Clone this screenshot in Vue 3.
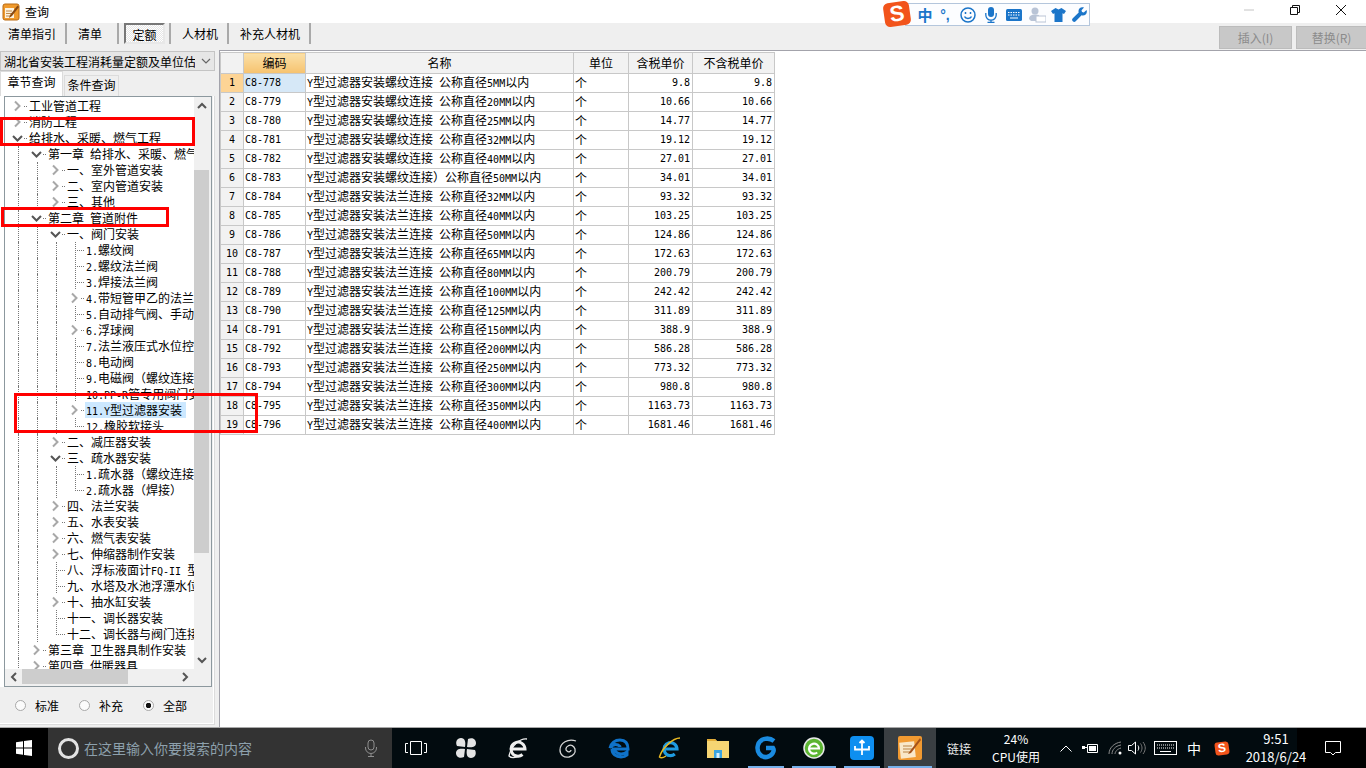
<script setup>
const toolTabs = [
  { label: '清单指引', w: 67 },
  { label: '清单', w: 52 },
  { label: '定额', w: 52, active: true },
  { label: '人材机', w: 58 },
  { label: '补充人材机', w: 82 }
]

// level, state (o = open, c = closed, l = leaf), text
const rawTree = [
  [0, 'c', '工业管道工程'],
  [0, 'c', '消防工程'],
  [0, 'o', '给排水、采暖、燃气工程'],
  [1, 'o', '第一章 给排水、采暖、燃气工程'],
  [2, 'c', '一、室外管道安装'],
  [2, 'c', '二、室内管道安装'],
  [2, 'c', '三、其他'],
  [1, 'o', '第二章 管道附件'],
  [2, 'o', '一、阀门安装'],
  [3, 'l', '1.螺纹阀'],
  [3, 'l', '2.螺纹法兰阀'],
  [3, 'l', '3.焊接法兰阀'],
  [3, 'c', '4.带短管甲乙的法兰阀'],
  [3, 'l', '5.自动排气阀、手动放风阀'],
  [3, 'c', '6.浮球阀'],
  [3, 'l', '7.法兰液压式水位控制阀'],
  [3, 'l', '8.电动阀'],
  [3, 'l', '9.电磁阀（螺纹连接）'],
  [3, 'l', '10.PP-R管专用阀门安装'],
  [3, 'c', '11.Y型过滤器安装', true],
  [3, 'l', '12.橡胶软接头'],
  [2, 'c', '二、减压器安装'],
  [2, 'o', '三、疏水器安装'],
  [3, 'l', '1.疏水器（螺纹连接）'],
  [3, 'l', '2.疏水器（焊接）'],
  [2, 'c', '四、法兰安装'],
  [2, 'c', '五、水表安装'],
  [2, 'c', '六、燃气表安装'],
  [2, 'c', '七、伸缩器制作安装'],
  [2, 'l', '八、浮标液面计FQ-II 型液位计'],
  [2, 'l', '九、水塔及水池浮漂水位标尺'],
  [2, 'c', '十、抽水缸安装'],
  [2, 'l', '十一、调长器安装'],
  [2, 'l', '十二、调长器与阀门连接'],
  [1, 'c', '第三章 卫生器具制作安装'],
  [1, 'c', '第四章 供暖器具'],
  [0, 'c', '通风空调工程']
]

function hasNext(i, level) {
  for (let j = i + 1; j < rawTree.length; j++) {
    if (rawTree[j][0] < level) return false
    if (rawTree[j][0] === level) return true
  }
  return false
}

const treeRows = rawTree.map(([level, state, text, selected], i) => ({
  level,
  state,
  text,
  selected,
  guides: Array.from({ length: level }, (_, l) => hasNext(i, l)),
  next: hasNext(i, level)
}))

// latin runs are half width in the original font, so split them out
function split(text) {
  return text.split(/([\x20-\x7e]+)/).filter(Boolean).map((t) => ({ t, lat: /^[\x20-\x7e]/.test(t) }))
}

const prices = [
  ['C8-778', 'Y型过滤器安装螺纹连接 公称直径5MM以内', '9.8'],
  ['C8-779', 'Y型过滤器安装螺纹连接 公称直径20MM以内', '10.66'],
  ['C8-780', 'Y型过滤器安装螺纹连接 公称直径25MM以内', '14.77'],
  ['C8-781', 'Y型过滤器安装螺纹连接 公称直径32MM以内', '19.12'],
  ['C8-782', 'Y型过滤器安装螺纹连接 公称直径40MM以内', '27.01'],
  ['C8-783', 'Y型过滤器安装螺纹连接）公称直径50MM以内', '34.01'],
  ['C8-784', 'Y型过滤器安装法兰连接 公称直径32MM以内', '93.32'],
  ['C8-785', 'Y型过滤器安装法兰连接 公称直径40MM以内', '103.25'],
  ['C8-786', 'Y型过滤器安装法兰连接 公称直径50MM以内', '124.86'],
  ['C8-787', 'Y型过滤器安装法兰连接 公称直径65MM以内', '172.63'],
  ['C8-788', 'Y型过滤器安装法兰连接 公称直径80MM以内', '200.79'],
  ['C8-789', 'Y型过滤器安装法兰连接 公称直径100MM以内', '242.42'],
  ['C8-790', 'Y型过滤器安装法兰连接 公称直径125MM以内', '311.89'],
  ['C8-791', 'Y型过滤器安装法兰连接 公称直径150MM以内', '388.9'],
  ['C8-792', 'Y型过滤器安装法兰连接 公称直径200MM以内', '586.28'],
  ['C8-793', 'Y型过滤器安装法兰连接 公称直径250MM以内', '773.32'],
  ['C8-794', 'Y型过滤器安装法兰连接 公称直径300MM以内', '980.8'],
  ['C8-795', 'Y型过滤器安装法兰连接 公称直径350MM以内', '1163.73'],
  ['C8-796', 'Y型过滤器安装法兰连接 公称直径400MM以内', '1681.46']
]

const radios = [
  { label: '标准' },
  { label: '补充' },
  { label: '全部', on: true }
]

const pins = [
  { id: 'fan', w: 52 },
  { id: 'e360', w: 52 },
  { id: 'swirl', w: 48 },
  { id: 'edge', w: 56 },
  { id: 'ie', w: 44 },
  { id: 'folder', w: 52 },
  { id: 'g', w: 44, run: true },
  { id: 'green', w: 52, run: true },
  { id: 'cross', w: 44, run: true },
  { id: 'note', w: 52, run: true, current: true }
]
</script>

<template>
  <div class="screen">
    <header class="titlebar">
      <svg class="app-icon" width="18" height="18" viewBox="0 0 18 18">
        <rect x="1" y="1" width="16" height="16" rx="2" fill="#f09a2c" stroke="#b96a12" />
        <path d="M3 5h9v10H3z" fill="#fdf3df" />
        <path d="M4 8h6M4 10.5h6M4 13h5" stroke="#c08a4a" />
        <path d="M15.5 2.5 8 12l-1 3 3-2 7-9z" fill="#8a4a12" />
      </svg>
      <span class="title-text">查询</span>
      <div class="window-btns">
        <svg width="12" height="12" viewBox="0 0 12 12"><path d="M1 6h10" stroke="#c4c4c4" /></svg>
        <svg width="12" height="12" viewBox="0 0 12 12" fill="none" stroke="#111"><path d="M1.5 3.5h7v7h-7zM3.5 3.500v-2h7v7h-2" /></svg>
        <svg width="12" height="12" viewBox="0 0 12 12" stroke="#111"><path d="M1 1l10 10M11 1 1 11" /></svg>
      </div>
    </header>

    <div class="toolbar">
      <div class="tool-tabs">
        <span v-for="tab in toolTabs" :key="tab.label" class="tool-cell" :style="{ width: tab.w + 'px' }">
          <span class="tool-tab" :class="{ active: tab.active }">{{ tab.label }}</span>
        </span>
      </div>
      <div class="actions">
        <button class="action">插入(I)</button>
        <button class="action">替换(R)</button>
      </div>
    </div>

    <main class="main">
      <aside class="left">
        <div class="combo">
          <span class="combo-text">湖北省安装工程消耗量定额及单位估价表</span>
          <svg width="10" height="6" viewBox="0 0 10 6" fill="none" stroke="#666" stroke-width="1.2"><path d="M1 1l4 4 4-4" /></svg>
        </div>
        <div class="tabs">
          <span class="tab active">章节查询</span>
          <span class="tab">条件查询</span>
        </div>
        <div class="pane">
          <div class="tree-box">
            <div class="tree-top">
              <div class="tree-view">
                <div v-for="row in treeRows" :key="row.text" class="tree-row">
                  <span v-for="(g, k) in row.guides" :key="k" class="indent" :class="{ guide: g }"></span>
                  <span class="node" :class="[row.state === 'l' ? 'leaf' : 'branch', row.next ? 'full' : 'half']">
                    <svg v-if="row.state === 'c'" width="13" height="16" viewBox="0 0 13 16" fill="none" stroke="#a8a8a8" stroke-width="2"><path d="M4 3.500 8.500 8 4 12.500" /></svg>
                    <svg v-else-if="row.state === 'o'" width="13" height="16" viewBox="0 0 13 16" fill="none" stroke="#555" stroke-width="2"><path d="M2 6l4.500 4.500L11 6" /></svg>
                  </span>
                  <span class="label" :class="{ selected: row.selected }"><span v-for="(p, k) in split(row.text)" :key="k" :class="{ lat: p.lat }">{{ p.t }}</span></span>
                </div>
              </div>
              <div class="vscroll">
                <svg width="16" height="17" viewBox="0 0 16 17" fill="none" stroke="#555" stroke-width="2"><path d="M4 11l4-4 4 4" /></svg>
                <div class="vtrack"><div class="vthumb"></div></div>
                <svg width="16" height="17" viewBox="0 0 16 17" fill="none" stroke="#555" stroke-width="2"><path d="M4 6l4 4 4-4" /></svg>
              </div>
            </div>
            <div class="hscroll">
              <svg width="17" height="16" viewBox="0 0 17 16" fill="none" stroke="#555" stroke-width="2"><path d="M11 4 7 8l4 4" /></svg>
              <div class="htrack"><div class="hthumb"></div></div>
              <svg width="17" height="16" viewBox="0 0 17 16" fill="none" stroke="#555" stroke-width="2"><path d="M6 4l4 4-4 4" /></svg>
              <span class="corner"></span>
            </div>
          </div>
          <div class="radios">
            <label v-for="r in radios" :key="r.label" class="radio">
              <span class="dot" :class="{ on: r.on }"></span>{{ r.label }}
            </label>
          </div>
        </div>
      </aside>

      <section class="right">
        <table class="grid">
          <colgroup>
            <col class="c-idx" /><col class="c-code" /><col class="c-name" /><col class="c-unit" /><col class="c-tax" /><col class="c-notax" />
          </colgroup>
          <thead>
            <tr>
              <th class="corner-th"></th>
              <th class="hot">编码</th>
              <th>名称</th>
              <th>单位</th>
              <th>含税单价</th>
              <th>不含税单价</th>
            </tr>
          </thead>
          <tbody>
            <tr v-for="(row, i) in prices" :key="row[0]">
              <td class="idx" :class="{ hot: i === 0 }">{{ i + 1 }}</td>
              <td class="mono" :class="{ current: i === 0 }">{{ row[0] }}</td>
              <td><span v-for="(p, k) in split(row[1])" :key="k" :class="{ lat: p.lat }">{{ p.t }}</span></td>
              <td>个</td>
              <td class="mono num">{{ row[2] }}</td>
              <td class="mono num">{{ row[2] }}</td>
            </tr>
          </tbody>
        </table>
      </section>
    </main>

    <footer class="taskbar">
      <div class="start">
        <svg width="16" height="16" viewBox="0 0 16 16" fill="#fff"><path d="M0 2.300 7 1.300v6.300H0zM8 1.100 16 0v7.600H8zM0 8.500h7v6.300L0 13.800zM8 8.500h8V16l-8-1.100z" /></svg>
      </div>
      <div class="search">
        <span class="cortana"></span>
        <span class="search-text">在这里输入你要搜索的内容</span>
        <svg width="14" height="18" viewBox="0 0 14 18" fill="none" stroke="#8f8f8f"><rect x="4" y="1" width="6" height="10" rx="3" /><path d="M1.500 8v1a5.500 5.500 0 0 0 11 0V8M7 15v2M4 17.500h6" /></svg>
      </div>
      <div class="task-view">
        <svg width="22" height="14" viewBox="0 0 22 14" fill="none" stroke="#fff"><path d="M5.500.5h11v13h-11zM3 2.500H.500v9H3M19 2.500h2.500v9H19" /></svg>
      </div>
      <div class="pins">
        <div v-for="pin in pins" :key="pin.id" class="pin" :class="{ current: pin.current }" :style="{ width: pin.w + 'px' }">
          <svg width="24" height="24" viewBox="0 0 24 24">
            <g v-if="pin.id === 'fan'" fill="#e4e4e4">
              <path d="M11 11 3 10C1 6 3 2 7 2s5 4 4 9zM13 11l1-8c4-2 8 0 8 4s-4 5-9 4zM13 13l8 1c2 4 0 8-4 8s-5-4-4-9zM11 13l-1 8c-4 2-8 0-8-4s4-5 9-4z" />
            </g>
            <g v-else-if="pin.id === 'e360'" fill="none" stroke="#efefef">
              <path d="M5 13h14a7 7 0 1 0-2.500 5.500" stroke-width="3" />
              <path d="M21 3C14 2 5 10 3 20c2 2 5 2 8 1" stroke-width="1.300" />
            </g>
            <g v-else-if="pin.id === 'swirl'" fill="none" stroke="#d6d6d6" stroke-width="1.300">
              <path d="M20 5c-8-3-16 2-16 9 0 5 4 8 9 7 4-1 7-4 6-8-1-3-4-5-7-3-2 1-3 4-1 5 2 2 4 0 4-1" />
            </g>
            <path v-else-if="pin.id === 'edge'" d="M4 13h16c0-6-3-9-8-9-5 0-9 3-10 8 2-3 5-4 8-3 1 1 2 1 2 2M4 13c0 5 4 8 9 8 3 0 5-1 6-2v-3c-3 2-8 3-11 0-1-1-2-2-2-3" fill="none" stroke="#0f72c9" stroke-width="3" />
            <g v-else-if="pin.id === 'ie'" fill="none">
              <path d="M6 13h13a6.500 6.500 0 1 0-2.200 5" stroke="#1f9be0" stroke-width="3.200" />
              <path d="M22 2C15 2 4 12 1.500 21c2 2 5 0 6.500-1" stroke="#e8b923" stroke-width="1.500" />
            </g>
            <g v-else-if="pin.id === 'folder'">
              <path d="M1 3h8l2 2h12v17H1z" fill="#f6d573" />
              <path d="M1 3h8l2 2H1z" fill="#e3ad38" />
              <path d="M8 14h8v8H8z" fill="#3ba3e0" />
              <path d="M10.500 17h3v5h-3z" fill="#d7eefb" />
            </g>
            <path v-else-if="pin.id === 'g'" d="M20 5C15 1 6 2 4 9c-2 7 3 13 9 12 5-1 8-6 6-9h-7" fill="none" stroke="#1a8be0" stroke-width="4.500" />
            <g v-else-if="pin.id === 'green'" fill="none">
              <circle cx="12" cy="12" r="10" fill="#5cb531" stroke="#e8e8e8" stroke-width="1.500" />
              <path d="M7 12.500h10a5 5 0 1 0-1.800 4" stroke="#fff" stroke-width="2.200" />
            </g>
            <g v-else-if="pin.id === 'cross'">
              <rect width="24" height="24" rx="4" fill="#0e8ff0" />
              <path d="M12 5v14M5 10v3.500h14V10M9.500 7 12 4.500 14.500 7" fill="none" stroke="#fff" stroke-width="1.800" />
            </g>
            <g v-else>
              <rect width="24" height="24" rx="2" fill="#f19a31" />
              <path d="M2 6h15v16H2z" fill="#f9e8c9" transform="rotate(-6 9 14)" />
              <path d="M5 10h9M5 13h9M5 16h8" stroke="#b98345" />
              <path d="M22 2 12 15l-2 3 3-1L23 4z" fill="#a5521a" />
            </g>
          </svg>
          <span v-if="pin.run" class="run-bar"></span>
        </div>
      </div>
      <span class="link-band">链接</span>
      <div class="cpu"><span>24%</span><span>CPU使用</span></div>
      <div class="tray">
        <svg width="12" height="7" viewBox="0 0 12 7" fill="none" stroke="#fff"><path d="M.500 6.500 6 1l5.500 5.500" /></svg>
        <svg width="16" height="11" viewBox="0 0 16 11"><path d="M5.500 1.500h10v8h-10z" fill="none" stroke="#fff" /><path d="M7 3h7v5H7z" fill="#fff" /><path d="M0 3h3v3H0zM3 4h2v1H3z" fill="#fff" /></svg>
        <svg width="14" height="14" viewBox="0 0 14 14" fill="none" stroke="#8c8c8c"><path d="M1 13C1 7 6 2 13 1M4 13c0-4 3-8 9-9M7 13c0-2 2-5 6-6" /><circle cx="12" cy="12" r="1.500" fill="#fff" stroke="none" /></svg>
        <svg width="18" height="14" viewBox="0 0 18 14" fill="none" stroke="#fff"><path d="M.500 4.500h3l4-3.500v12l-4-3.500h-3z" /><path d="M10 4.500c1 1.500 1 3.500 0 5" /><path d="M12.500 2.500c2 3 2 6 0 9M15 1c3 4 3 8 0 12" stroke="#777" /></svg>
        <svg width="23" height="14" viewBox="0 0 23 14" fill="none" stroke="#fff"><rect x=".5" y=".5" width="22" height="13" /><path d="M3 4h17M3 7h17" stroke-dasharray="1 1" /><path d="M6 10.500h11" /></svg>
        <span class="tray-zh">中</span>
        <span class="sogou small">S</span>
      </div>
      <div class="clock"><span>9:51</span><span>2018/6/24</span></div>
      <div class="notify">
        <svg width="16" height="16" viewBox="0 0 16 16" fill="none" stroke="#fff"><path d="M.500 1.500h15v11h-5L8 15l-2.500-2.500h-5z" /></svg>
      </div>
    </footer>

    <!-- sogou ime bar floats over the window -->
    <div class="ime">
      <div class="ime-bar">
        <span class="ime-zh">中</span>
        <span class="ime-punct">°,</span>
        <svg width="16" height="16" viewBox="0 0 16 16" fill="none" stroke="#1b75c9" stroke-width="1.500"><circle cx="8" cy="8" r="7" /><path d="M4.500 9.500c1 2.500 6 2.500 7 0" /><path d="M5.500 5v2M10.500 5v2" /></svg>
        <svg width="12" height="16" viewBox="0 0 12 16" fill="#1b75c9"><rect x="3" y="0" width="6" height="10" rx="3" /><path d="M.8 6v2a5.200 5.200 0 0 0 10.400 0V6M6 13v2M2.500 15.500h7" fill="none" stroke="#1b75c9" stroke-width="1.300" /></svg>
        <svg width="16" height="12" viewBox="0 0 16 12"><rect width="16" height="12" rx="1.500" fill="#1b75c9" /><path d="M2 3.500h12M2 6h12" stroke="#fff" stroke-dasharray="1.500 1" /><path d="M4 9h8" stroke="#fff" /></svg>
        <svg width="18" height="16" viewBox="0 0 18 16" fill="#b9c4d6"><circle cx="7" cy="4" r="3.500" /><path d="M1 12c0-3 2-4.500 6-4.500s4 1 4 1V14H3z" /><rect x="8" y="9" width="10" height="6" fill="#fff" stroke="#b9c4d6" /></svg>
        <svg width="15" height="14" viewBox="0 0 15 14" fill="#1b75c9"><path d="M4.500 0 7.500 1.500 10.500 0 15 3l-2 3-1.500-.8V14h-8V5.200L2 6 0 3z" /></svg>
        <svg width="15" height="15" viewBox="0 0 15 15" fill="#1b75c9"><path d="M14.500 3 11.800 5.500 10 5l-.5-1.800L12 .6C9.500-.5 6.500 1 6.500 4c0 .5 0 1 .2 1.400L.8 11.300a2 2 0 0 0 2.900 2.900l5.900-5.900c3.300 1 6.300-2 4.900-5.300z" /></svg>
      </div>
      <span class="sogou ime-logo">S</span>
    </div>

    <!-- hand-drawn review marks -->
    <div class="mark mark-a"></div>
    <div class="mark mark-b"></div>
    <div class="mark mark-c"></div>
  </div>
</template>

<style>
body {
  margin: 0;
  background: #fff;
}
</style>

<style scoped>
.screen {
  position: relative;
  width: 1366px;
  height: 768px;
  display: flex;
  flex-direction: column;
  overflow: hidden;
  background: #efefef;
  font-family: "Noto Sans CJK SC", "Liberation Sans", sans-serif;
  font-size: 12px;
  color: #000;
}

.lat {
  font-family: "DejaVu Sans Mono", monospace;
  font-size: 10px;
}

.titlebar {
  height: 23px;
  flex: none;
  display: flex;
  align-items: center;
  background: #fff;
  padding-left: 2px;
}

.app-icon {
  margin-right: 5px;
}

.window-btns {
  margin-left: auto;
  display: flex;
  align-items: center;
  gap: 34px;
  padding-right: 19px;
  margin-top: -3px;
}

.toolbar {
  height: 27px;
  flex: none;
  display: flex;
  justify-content: space-between;
}

.tool-tabs {
  display: flex;
  height: 21px;
}

.tool-cell {
  display: flex;
  align-items: center;
  box-sizing: border-box;
  padding-left: 11px;
  border-right: 2px solid #a9a9a9;
}

.tool-cell:first-child {
  padding-left: 8px;
}

.tool-cell:nth-child(3) {
  padding-left: 5px;
}

.tool-tab {
  line-height: 19px;
  white-space: nowrap;
}

.tool-tab.active {
  width: 41px;
  height: 21px;
  box-sizing: border-box;
  text-align: center;
  border: 2px solid;
  border-color: #777 #e8e8e8 #e8e8e8 #777;
  background: repeating-conic-gradient(#fff 0 25%, #e6e6e6 0 50%) 0 0 / 2px 2px;
}

.actions {
  display: flex;
  gap: 4px;
  padding-top: 3px;
}

.action {
  width: 73px;
  height: 23px;
  box-sizing: border-box;
  padding: 0;
  border: 1px solid #bcbcbc;
  background: #c8c8c8;
  color: #8b8b8b;
  font: inherit;
}

.action:last-child {
  width: 70px;
  border-right: 0;
}

.main {
  flex: 1;
  min-height: 0;
  display: flex;
}

.left {
  width: 219px;
  flex: none;
  padding-top: 1px;
  box-sizing: border-box;
}

.combo {
  width: 215px;
  height: 20px;
  box-sizing: border-box;
  display: flex;
  align-items: center;
  justify-content: space-between;
  padding: 0 3px;
  background: #e6e6e6;
  border: 1px solid #c4c4c4;
  overflow: hidden;
}

.combo-text {
  width: 191px;
  white-space: nowrap;
  overflow: hidden;
}

.tabs {
  display: flex;
  align-items: flex-end;
  height: 25px;
  gap: 1px;
}

.tab {
  height: 21px;
  width: 55px;
  box-sizing: border-box;
  text-align: center;
  line-height: 18px;
  border: 1px solid #dcdcdc;
  border-bottom: 0;
}

.tab.active {
  height: 25px;
  width: 63px;
  line-height: 20px;
  background: #fff;
}

.pane {
  width: 215px;
  height: 629px;
  box-sizing: border-box;
  padding-left: 4px;
  border-right: 1px solid #dcdcdc;
  border-bottom: 1px solid #dcdcdc;
  box-shadow: inset -1px -1px 0 #fff;
}

.tree-box {
  width: 208px;
  height: 591px;
  box-sizing: border-box;
  border: 1px solid #8c989e;
  box-shadow: -4px 0 0 #fff;
  background: #fff;
  display: flex;
  flex-direction: column;
}

.tree-top {
  height: 572px;
  display: flex;
}

.tree-view {
  width: 189px;
  padding-top: 1px;
  overflow: hidden;
  white-space: nowrap;
}

.tree-row {
  height: 16px;
  line-height: 16px;
  display: flex;
  padding-left: 6px;
}

.indent {
  width: 12px;
  height: 16px;
  flex: none;
  margin-left: 7px;
  box-sizing: border-box;
}

.indent.guide {
  border-left: 1px dotted #777;
}

.node {
  width: 19px;
  height: 16px;
  flex: none;
  background-repeat: no-repeat;
}

.node svg {
  display: block;
  background: #fff;
}

.node.full {
  background-image:
    repeating-linear-gradient(to bottom, #777 0 1px, transparent 1px 2px),
    repeating-linear-gradient(to right, #777 0 1px, transparent 1px 2px);
  background-size: 1px 16px, 10px 1px;
  background-position: 7px 0, 7px 8px;
}

.node.half {
  background-image:
    repeating-linear-gradient(to bottom, #777 0 1px, transparent 1px 2px),
    repeating-linear-gradient(to right, #777 0 1px, transparent 1px 2px);
  background-size: 1px 9px, 10px 1px;
  background-position: 7px 0, 7px 8px;
}

.label {
  margin-left: -1px;
  flex: none;
}

.label.selected {
  background: #cce8ff;
  padding: 0 4px 0 1px;
  margin-left: -2px;
}

.vscroll {
  width: 17px;
  flex: none;
  display: flex;
  flex-direction: column;
  background: #f0f0f0;
}

.vtrack {
  flex: 1;
  padding-top: 56px;
}

.vthumb {
  width: 15px;
  height: 383px;
  background: #cdcdcd;
}

.hscroll {
  height: 17px;
  flex: none;
  display: flex;
  background: #f0f0f0;
}

.htrack {
  width: 155px;
}

.hthumb {
  width: 106px;
  height: 15px;
  background: #cdcdcd;
}

.corner {
  flex: 1;
}

.radios {
  display: flex;
  height: 36px;
  align-items: center;
  padding-left: 11px;
  gap: 14px;
}

.radio {
  display: flex;
  align-items: center;
  gap: 9px;
  width: 50px;
}

.dot {
  width: 11px;
  height: 11px;
  box-sizing: border-box;
  border: 1px solid #a8a8a8;
  border-radius: 50%;
  background: #fbfbfb;
}

.dot.on {
  background: radial-gradient(circle, #111 0 2.500px, #fbfbfb 3px);
}

.right {
  flex: 1;
  background: #fff;
  border-top: 1px solid #a3a3ab;
  border-left: 1px solid #a3a3ab;
  padding: 1px 0 0;
}

.grid {
  width: 554px;
  table-layout: fixed;
  border-collapse: collapse;
}

.c-idx { width: 23px; }
.c-code { width: 62px; }
.c-name { width: 268px; }
.c-unit { width: 55px; }
.c-tax { width: 64px; }
.c-notax { width: 82px; }

.grid th {
  height: 21px;
  padding: 0;
  line-height: 18px;
  background: #f2f2f2;
  font-weight: 400;
  border: 1px solid #c8c8c8;
  box-sizing: border-box;
}

.grid th.hot {
  background: linear-gradient(#fbe0a8, #f6c26e);
}

.grid td {
  height: 19px;
  padding: 0 0 0 1px;
  border: 1px solid #c8c8c8;
  box-sizing: border-box;
  line-height: 12px;
  white-space: nowrap;
  overflow: hidden;
}

.grid td.idx {
  padding: 0;
  background: #f2f2f2;
  text-align: center;
  font-family: "DejaVu Sans Mono", monospace;
  font-size: 10px;
}

.grid td.hot {
  background: #fdd495;
}

.grid td.mono {
  font-family: "DejaVu Sans Mono", monospace;
  font-size: 10px;
}

.grid td.current {
  background: #d6e8f7;
}

.grid td.num {
  text-align: right;
  padding-right: 2px;
}

.taskbar {
  height: 41px;
  flex: none;
  display: flex;
  align-items: center;
  background: linear-gradient(to right, #020b0f 1297px, #000 0);
  color: #fff;
  border-top: 1px solid #a8a8a8;
  box-sizing: border-box;
}

.start {
  width: 48px;
  height: 100%;
  background: #000;
  display: flex;
  align-items: center;
  justify-content: center;
}

.search {
  width: 344px;
  height: 100%;
  box-sizing: border-box;
  background: #333;
  display: flex;
  align-items: center;
  padding: 0 14px 0 10px;
}

.cortana {
  width: 21px;
  height: 21px;
  box-sizing: border-box;
  border: 3px solid #e2e2e2;
  border-radius: 50%;
  margin-right: 5px;
}

.search-text {
  flex: 1;
  font-size: 14px;
  color: #8da0ac;
}

.task-view {
  width: 48px;
  display: flex;
  justify-content: center;
}

.pins {
  display: flex;
  height: 100%;
}

.pin {
  position: relative;
  display: flex;
  align-items: center;
  justify-content: center;
}

.pin.current {
  background: #3a3f42;
}

.run-bar {
  position: absolute;
  left: 4px;
  right: 4px;
  bottom: 0;
  height: 2px;
  background: #76b0ea;
}

.link-band {
  width: 39px;
  margin-left: 11px;
  color: #e8e8e8;
}

.cpu,
.clock {
  display: flex;
  flex-direction: column;
  align-items: center;
  line-height: 18px;
}

.cpu {
  width: 60px;
}

.tray {
  display: grid;
  grid-template-columns: 24px 24px 26px 18px 38px 20px 36px;
  justify-items: center;
  align-items: center;
  margin-left: 8px;
}

.tray-zh {
  font-size: 14px;
}

.sogou {
  width: 26px;
  height: 24px;
  border-radius: 5px;
  background: #f2541b;
  color: #fff;
  font: 700 22px/24px "Liberation Sans", sans-serif;
  text-align: center;
  transform: rotate(-8deg);
}

.sogou.small {
  width: 14px;
  height: 13px;
  font-size: 12px;
  line-height: 13px;
  border-radius: 3px;
}

.clock {
  width: 72px;
  font-size: 13px;
}

.notify {
  width: 42px;
  display: flex;
  justify-content: center;
}

.ime {
  position: absolute;
  left: 884px;
  top: 2px;
  width: 206px;
  height: 25px;
  padding: 1px 0 0 21px;
  box-sizing: border-box;
}

.ime-logo {
  position: absolute;
  left: 0;
  top: 0;
}

.ime-bar {
  width: 185px;
  height: 23px;
  box-sizing: border-box;
  display: grid;
  grid-template-columns: 18px 22px 24px 22px 23px 23px 20px 22px;
  justify-items: center;
  align-items: center;
  padding-left: 10px;
  background: #fcfdff;
  border: 1px solid #b4c6dc;
}

.ime-zh {
  color: #1b75c9;
  font-size: 15px;
  font-weight: 700;
}

.ime-punct {
  color: #1b75c9;
  font: 700 14px "Liberation Sans", sans-serif;
}

.mark {
  position: absolute;
  box-sizing: border-box;
  border: 3px solid #f00;
}

.mark-a {
  left: 0;
  top: 117px;
  width: 195px;
  height: 29px;
}

.mark-b {
  left: 1px;
  top: 207px;
  width: 168px;
  height: 20px;
}

.mark-c {
  left: 14px;
  top: 393px;
  width: 244px;
  height: 40px;
}
</style>
